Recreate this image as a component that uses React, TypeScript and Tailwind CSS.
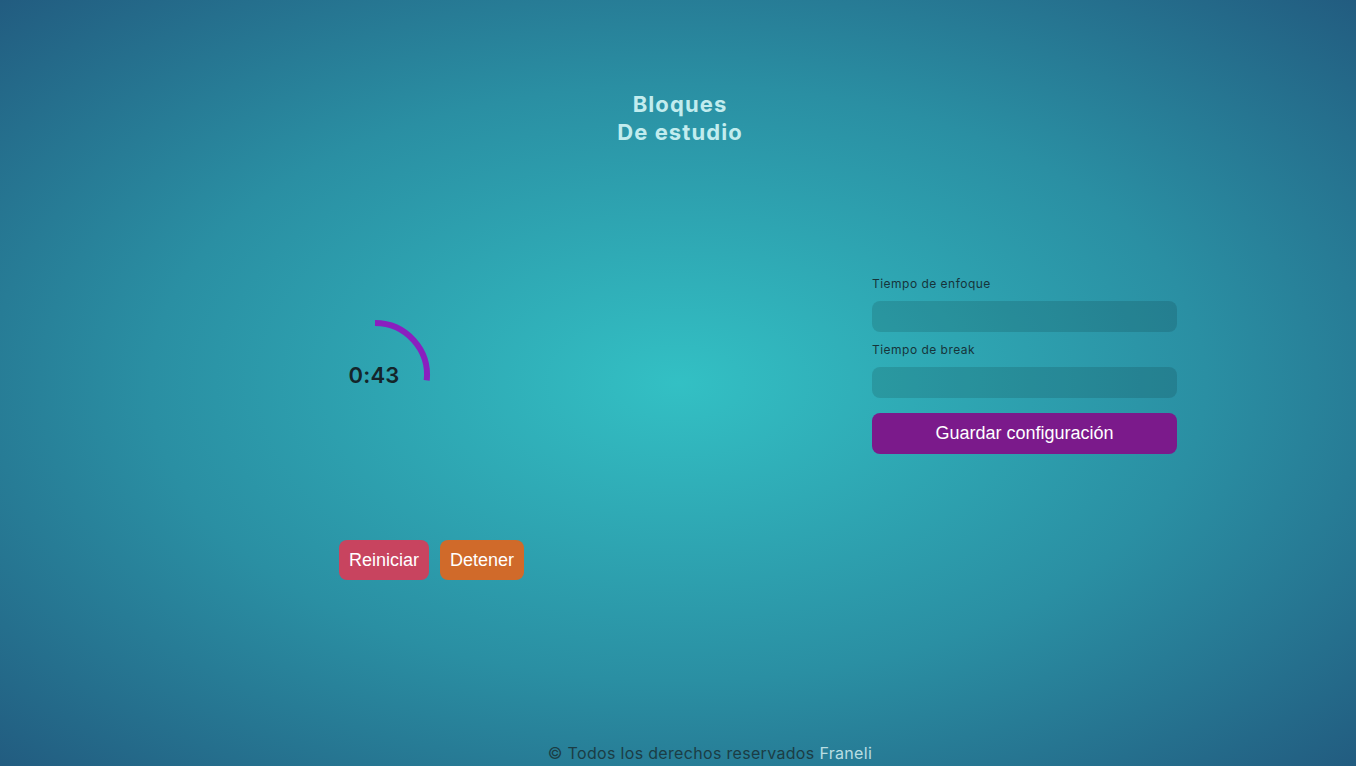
import React from "react";

const TimerRing = ({ time }: { time: string }) => {
  // arc from 12 o'clock clockwise, ~96deg
  const r = 52;
  const a = (96 * Math.PI) / 180;
  const x = 60 + r * Math.sin(a);
  const y = 60 - r * Math.cos(a);
  return (
    <div className="relative w-[120px] h-[120px]">
      <svg width="120" height="120" viewBox="0 0 120 120">
        <path
          d={`M 60 ${60 - r} A ${r} ${r} 0 0 1 ${x} ${y}`}
          fill="none"
          stroke="#8a1fbf"
          strokeWidth="6"
        />
      </svg>
      <div className="absolute inset-0 flex items-center justify-center">
        <span className="text-[22px] font-semibold text-[#14252a] tracking-[0.01em] mt-[1px] -ml-[2px]">
          {time}
        </span>
      </div>
    </div>
  );
};

const Field = ({ label }: { label: string }) => (
  <div className="flex flex-col">
    <label className="text-[12px] leading-4 tracking-[0.04em] text-[#16343a] mb-[9px]">{label}</label>
    <input className="h-[31px] w-full rounded-lg bg-black/[0.12] outline-none border-0 px-3" />
  </div>
);

export default function App() {
  return (
    <div
      className="h-[766px] w-full flex flex-col bg-[radial-gradient(ellipse_farthest-corner_at_50%_50%,#33c0c4_0%,#2a8fa3_55%,#225c80_100%)]"
      style={{ fontFamily: "Inter, 'Open Sans', sans-serif" }}
    >
      <header className="pt-[90px] text-center">
        <h1 className="text-[22px] leading-7 font-bold tracking-[0.05em] text-[#c2ecee] pl-[4px]">
          Bloques
          <br />
          De estudio
        </h1>
      </header>

      <main className="flex-1 flex">
        <section className="ml-[339px] flex flex-col">
          <div className="mt-[169px] -ml-[24px]">
            <TimerRing time="0:43" />
          </div>
          <div
            className="mt-[105px] flex gap-[11px]"
            style={{ fontFamily: "'Liberation Sans', Arial, sans-serif" }}
          >
            <button className="h-10 px-[10px] rounded-lg bg-[#c8445f] text-white text-[18px]">
              Reiniciar
            </button>
            <button className="h-10 px-[10px] rounded-lg bg-[#d06a2a] text-white text-[18px]">
              Detener
            </button>
          </div>
        </section>

        <section className="ml-auto mr-[179px] w-[305px] mt-[130px] flex flex-col">
          <Field label="Tiempo de enfoque" />
          <div className="mt-[10px]">
            <Field label="Tiempo de break" />
          </div>
          <button
            className="mt-[15px] h-[41px] rounded-lg bg-[#7b1a8b] text-white text-[18px]"
            style={{ fontFamily: "'Liberation Sans', Arial, sans-serif" }}
          >
            Guardar configuración
          </button>
        </section>
      </main>

      <footer className="text-center text-[16px] leading-6 tracking-[0.02em] text-[#1b3d45] pb-[1px] pl-[64px]">
        © Todos los derechos reservados <span className="text-[#b9dee2]">Franeli</span>
      </footer>
    </div>
  );
}
